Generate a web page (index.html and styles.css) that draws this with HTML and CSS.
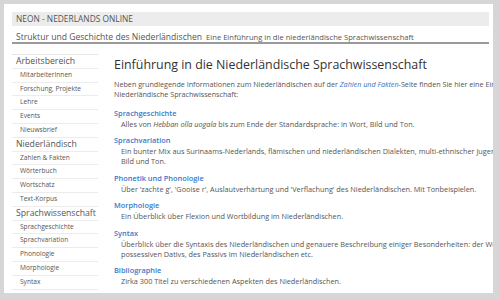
FILE: index.html
```html
<!DOCTYPE html>
<html lang="de">
<head>
<meta charset="utf-8">
<title>NEON - Nederlands Online</title>
<link rel="stylesheet" href="styles.css">
</head>
<body>
<div class="page">
  <header class="header">
    <div class="site-title">NEON - NEDERLANDS ONLINE</div>
    <div class="subtitle"><span class="sub-main">Struktur und Geschichte des Niederländischen</span><span class="sub-small">Eine Einführung in die niederländische Sprachwissenschaft</span></div>
  </header>
  <div class="body-row">
    <nav class="sidebar">
      <div class="cat">Arbeitsbereich</div>
      <div class="item">MitarbeiterInnen</div>
      <div class="item">Forschung, Projekte</div>
      <div class="item">Lehre</div>
      <div class="item">Events</div>
      <div class="item">Nieuwsbrief</div>
      <div class="cat">Niederländisch</div>
      <div class="item">Zahlen &amp; Fakten</div>
      <div class="item">Wörterbuch</div>
      <div class="item">Wortschatz</div>
      <div class="item">Text-Korpus</div>
      <div class="cat">Sprachwissenschaft</div>
      <div class="item">Sprachgeschichte</div>
      <div class="item">Sprachvariation</div>
      <div class="item">Phonologie</div>
      <div class="item">Morphologie</div>
      <div class="item">Syntax</div>
      <div class="item">Plattdeutsch</div>
    </nav>
    <main class="main">
      <h1 class="title">Einführung in die Niederländische Sprachwissenschaft</h1>
      <p class="intro">Neben grundlegende Informationen zum Niederländischen auf der <a class="link" href="#">Zahlen und Fakten</a>-Seite finden Sie hier eine Einführung in die<br>Niederländische Sprachwissenschaft:</p>
      <div class="topic">
        <div class="topic-head">Sprachgeschichte</div>
        <div class="topic-desc">Alles von <i>Hebban olla uogala</i> bis zum Ende der Standardsprache: in Wort, Bild und Ton.</div>
      </div>
      <div class="topic">
        <div class="topic-head">Sprachvariation</div>
        <div class="topic-desc">Ein bunter Mix aus Surinaams-Nederlands, flämischen und niederländischen Dialekten, multi-ethnischer Jugendsprache und vielem mehr in Wort,<br>Bild und Ton.</div>
      </div>
      <div class="topic">
        <div class="topic-head">Phonetik und Phonologie</div>
        <div class="topic-desc">Über 'zachte g', 'Gooise r', Auslautverhärtung und 'Verflachung' des Niederländischen. Mit Tonbeispielen.</div>
      </div>
      <div class="topic">
        <div class="topic-head">Morphologie</div>
        <div class="topic-desc">Ein Überblick über Flexion und Wortbildung im Niederländischen.</div>
      </div>
      <div class="topic">
        <div class="topic-head">Syntax</div>
        <div class="topic-desc">Überblick über die Syntaxis des Niederländischen und genauere Beschreibung einiger Besonderheiten: der Wortstellung, des<br>possessiven Dativs, des Passivs im Niederländischen etc.</div>
      </div>
      <div class="topic">
        <div class="topic-head">Bibliographie</div>
        <div class="topic-desc">Zirka 300 Titel zu verschiedenen Aspekten des Niederländischen.</div>
      </div>
    </main>
  </div>
</div>
</body>
</html>
```
FILE: styles.css
```css
html, body {
  margin: 0;
  padding: 0;
  background: #d6d6d6;
  font-family: "Open Sans", "DejaVu Sans", sans-serif;
}
.page {
  margin: 4px;
  width: 489px;
  height: 289px;
  background: #fff;
  overflow: hidden;
  padding: 8px 0 0 8px;
  box-sizing: border-box;
}
.header {
  width: 477px;
}
.site-title {
  background: #ececec;
  height: 14px;
  line-height: 14px;
  font-size: 8.4px;
  color: #555;
  padding-left: 4px;
  white-space: nowrap;
}
.subtitle {
  height: 15px;
  line-height: 15px;
  padding-left: 4px;
  border-bottom: 2px solid #9a9a9a;
  white-space: nowrap;
  color: #555;
  margin-top: 1px;
}
.sub-main {
  font-size: 8.6px;
  margin-right: 4px;
}
.sub-small {
  font-size: 7.6px;
}
.body-row {
  display: flex;
  gap: 16px;
  margin-top: 10px;
}
.sidebar {
  flex: 0 0 86px;
  border-top: 1px solid #e6e6e6;
}
.cat, .item {
  border-bottom: 1px solid #ececec;
  white-space: nowrap;
  color: #555;
  height: 12.8px;
  line-height: 12.8px;
}
.cat {
  font-size: 8.7px;
  padding-left: 4px;
}
.item {
  font-size: 6.6px;
  padding-left: 8px;
}
.main {
  flex: 1;
  min-width: 0;
  white-space: nowrap;
  color: #555;
}
.title {
  margin: 3px 0 0;
  font-size: 12.4px;
  font-weight: normal;
  color: #333;
  line-height: 16px;
}
.intro {
  margin: 6px 0 8.5px;
  font-size: 7.2px;
  line-height: 10px;
}
.link {
  color: #3a72c4;
  font-style: italic;
  text-decoration: none;
}
.topic {
  margin-bottom: 6.5px;
}
.topic-head {
  font-size: 7.4px;
  font-weight: 600;
  color: #3a78c8;
  line-height: 11px;
}
.topic-desc {
  font-size: 7.3px;
  line-height: 10px;
  padding-left: 7px;
}
```
